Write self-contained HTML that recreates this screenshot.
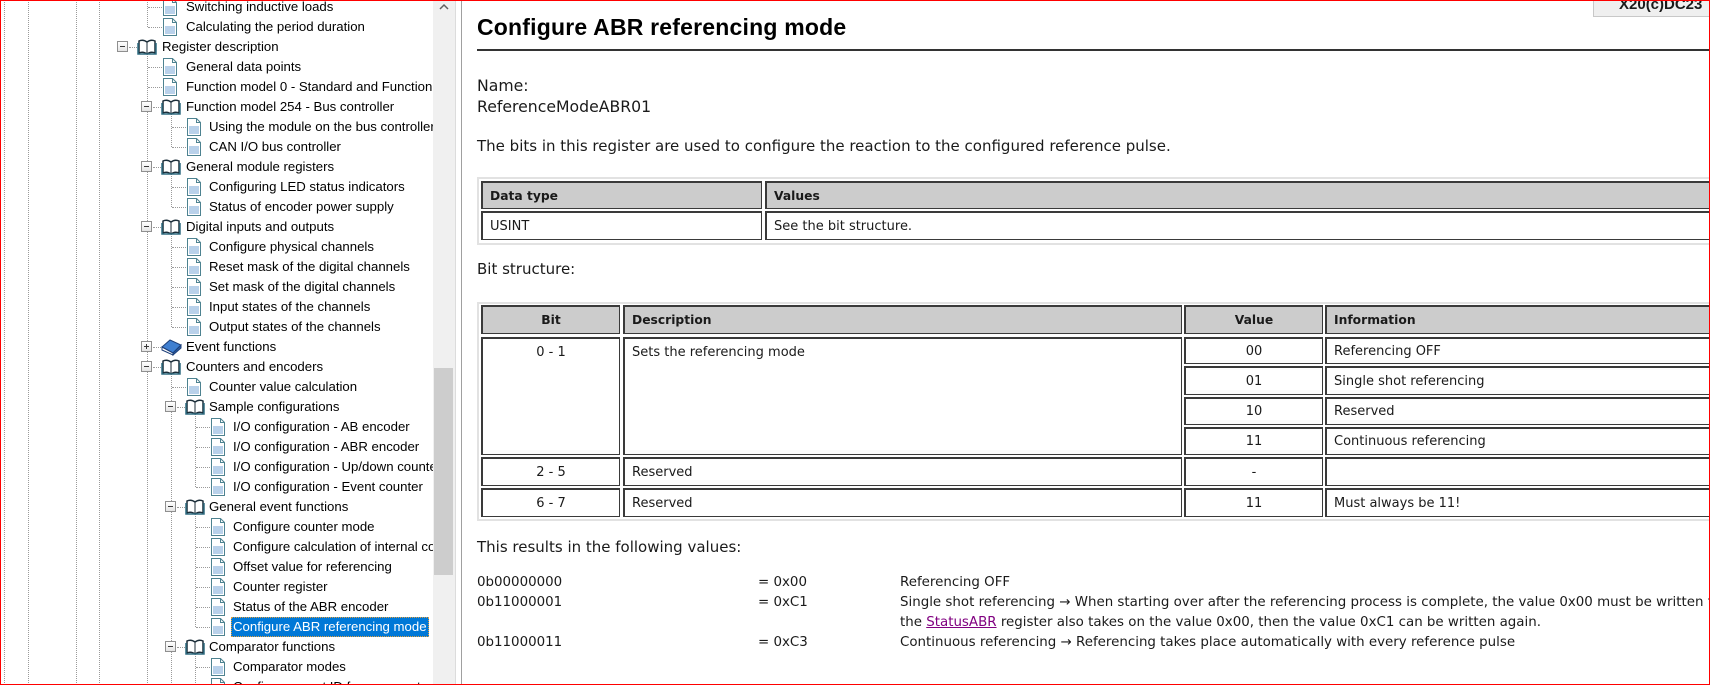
<!DOCTYPE html>
<html><head><meta charset="utf-8"><style>
*{margin:0;padding:0;box-sizing:border-box}
body{width:1710px;height:685px;overflow:hidden;background:#fff;position:relative;font-family:"DejaVu Sans","Liberation Sans",sans-serif;color:#1a1a1a}
.abs{position:absolute}
#tree{position:absolute;left:0;top:0;width:433px;height:685px;overflow:hidden;font-family:"Liberation Sans",sans-serif;font-size:13.2px;color:#000}
.v{position:absolute;border-left:1px dotted #9a9a9a;width:0}
.h{position:absolute;border-top:1px dotted #9a9a9a;height:0}
.r{position:absolute;left:0;width:433px;height:20px}
.r span{position:absolute;top:2px;white-space:nowrap;line-height:16px}
.r svg{position:absolute}
.bx{position:absolute;width:11px;height:11px;border:1px solid #8f8f8f;background:linear-gradient(#fff,#e4e4e4);top:4px}
.bx:before{content:"";position:absolute;left:2px;top:4px;width:5px;height:1px;background:#3a3a3a}
.bx.p:after{content:"";position:absolute;left:4px;top:2px;width:1px;height:5px;background:#3a3a3a}
#sb{position:absolute;left:433px;top:0;width:22px;height:685px;background:#f0f0f0}
#thumb{position:absolute;left:434px;top:368px;width:19px;height:207px;background:#cdcdcd}
#content{position:absolute;left:462px;top:0;width:1248px;height:685px;font-size:13px;overflow:hidden}
h1{position:absolute;left:15px;top:14px;font-family:"Liberation Sans",sans-serif;font-weight:bold;font-size:23px;letter-spacing:0.2px;color:#000}
.t{position:absolute;white-space:nowrap;line-height:16px}
.big{font-size:15px}
.nm{font-size:15.7px}
.lo{font-size:13.4px}
.c{position:absolute;border:1px solid #3a3a3a;border-left-width:2px;border-top-width:2px;white-space:nowrap;overflow:hidden;padding-left:7px;display:flex;align-items:center}
.c.hd{background:#cccccc;font-weight:bold;font-size:12.3px}
.c.ct{justify-content:center;padding-left:0}
.outer{position:absolute;border:2px solid #e2e2e2}
a{color:#800080}
</style></head><body>

<div id="tree">
<div class="v" style="left:4px;top:0;height:685px"></div>
<div class="v" style="left:28px;top:0;height:685px"></div>
<div class="v" style="left:76px;top:0;height:685px"></div>
<div class="v" style="left:99px;top:0;height:685px"></div>
<div class="v" style="left:147px;top:0;height:27px"></div>
<div class="v" style="left:147px;top:53px;height:632px"></div>
<div class="v" style="left:171px;top:113px;height:34px"></div>
<div class="v" style="left:171px;top:173px;height:34px"></div>
<div class="v" style="left:171px;top:233px;height:94px"></div>
<div class="v" style="left:171px;top:373px;height:312px"></div>
<div class="v" style="left:195px;top:413px;height:74px"></div>
<div class="v" style="left:195px;top:513px;height:114px"></div>
<div class="v" style="left:195px;top:653px;height:32px"></div>

<div class="r" style="top:-3px"><div class="h" style="left:148px;top:10px;width:14px"></div><svg style="left:162px;top:1px" width="16" height="18"><path d="M1.5 .5h9l4 4v13h-13z" fill="#fff" stroke="#4d8290"/><path d="M10.5 .5v4h4" fill="none" stroke="#4d8290"/><rect x="3" y="8" width="10" height="8" fill="#b9d1ea"/></svg><span style="left:186px">Switching inductive loads</span></div>
<div class="r" style="top:17px"><div class="h" style="left:148px;top:10px;width:14px"></div><svg style="left:162px;top:1px" width="16" height="18"><path d="M1.5 .5h9l4 4v13h-13z" fill="#fff" stroke="#4d8290"/><path d="M10.5 .5v4h4" fill="none" stroke="#4d8290"/><rect x="3" y="8" width="10" height="8" fill="#b9d1ea"/></svg><span style="left:186px">Calculating the period duration</span></div>
<div class="r" style="top:37px"><div class="bx" style="left:117px"></div><div class="h" style="left:129px;top:10px;width:8px"></div><svg style="left:137px;top:1px" width="20" height="18"><path d="M2 3q4-2 8 1q4-3 8-1v12q-4-2-8 1q-4-3-8-1z" fill="#fff" stroke="#1c2e3a" stroke-width="1.5"/><path d="M10 4v12" stroke="#1c2e3a"/><path d="M1 5v11h18V5" fill="none" stroke="#2f6c80" stroke-width="1.5"/></svg><span style="left:162px">Register description</span></div>
<div class="r" style="top:57px"><div class="h" style="left:148px;top:10px;width:14px"></div><svg style="left:162px;top:1px" width="16" height="18"><path d="M1.5 .5h9l4 4v13h-13z" fill="#fff" stroke="#4d8290"/><path d="M10.5 .5v4h4" fill="none" stroke="#4d8290"/><rect x="3" y="8" width="10" height="8" fill="#b9d1ea"/></svg><span style="left:186px">General data points</span></div>
<div class="r" style="top:77px"><div class="h" style="left:148px;top:10px;width:14px"></div><svg style="left:162px;top:1px" width="16" height="18"><path d="M1.5 .5h9l4 4v13h-13z" fill="#fff" stroke="#4d8290"/><path d="M10.5 .5v4h4" fill="none" stroke="#4d8290"/><rect x="3" y="8" width="10" height="8" fill="#b9d1ea"/></svg><span style="left:186px">Function model 0 - Standard and Function</span></div>
<div class="r" style="top:97px"><div class="bx" style="left:141px"></div><div class="h" style="left:153px;top:10px;width:8px"></div><svg style="left:161px;top:1px" width="20" height="18"><path d="M2 3q4-2 8 1q4-3 8-1v12q-4-2-8 1q-4-3-8-1z" fill="#fff" stroke="#1c2e3a" stroke-width="1.5"/><path d="M10 4v12" stroke="#1c2e3a"/><path d="M1 5v11h18V5" fill="none" stroke="#2f6c80" stroke-width="1.5"/></svg><span style="left:186px">Function model 254 - Bus controller</span></div>
<div class="r" style="top:117px"><div class="h" style="left:172px;top:10px;width:14px"></div><svg style="left:186px;top:1px" width="16" height="18"><path d="M1.5 .5h9l4 4v13h-13z" fill="#fff" stroke="#4d8290"/><path d="M10.5 .5v4h4" fill="none" stroke="#4d8290"/><rect x="3" y="8" width="10" height="8" fill="#b9d1ea"/></svg><span style="left:209px">Using the module on the bus controller</span></div>
<div class="r" style="top:137px"><div class="h" style="left:172px;top:10px;width:14px"></div><svg style="left:186px;top:1px" width="16" height="18"><path d="M1.5 .5h9l4 4v13h-13z" fill="#fff" stroke="#4d8290"/><path d="M10.5 .5v4h4" fill="none" stroke="#4d8290"/><rect x="3" y="8" width="10" height="8" fill="#b9d1ea"/></svg><span style="left:209px">CAN I/O bus controller</span></div>
<div class="r" style="top:157px"><div class="bx" style="left:141px"></div><div class="h" style="left:153px;top:10px;width:8px"></div><svg style="left:161px;top:1px" width="20" height="18"><path d="M2 3q4-2 8 1q4-3 8-1v12q-4-2-8 1q-4-3-8-1z" fill="#fff" stroke="#1c2e3a" stroke-width="1.5"/><path d="M10 4v12" stroke="#1c2e3a"/><path d="M1 5v11h18V5" fill="none" stroke="#2f6c80" stroke-width="1.5"/></svg><span style="left:186px">General module registers</span></div>
<div class="r" style="top:177px"><div class="h" style="left:172px;top:10px;width:14px"></div><svg style="left:186px;top:1px" width="16" height="18"><path d="M1.5 .5h9l4 4v13h-13z" fill="#fff" stroke="#4d8290"/><path d="M10.5 .5v4h4" fill="none" stroke="#4d8290"/><rect x="3" y="8" width="10" height="8" fill="#b9d1ea"/></svg><span style="left:209px">Configuring LED status indicators</span></div>
<div class="r" style="top:197px"><div class="h" style="left:172px;top:10px;width:14px"></div><svg style="left:186px;top:1px" width="16" height="18"><path d="M1.5 .5h9l4 4v13h-13z" fill="#fff" stroke="#4d8290"/><path d="M10.5 .5v4h4" fill="none" stroke="#4d8290"/><rect x="3" y="8" width="10" height="8" fill="#b9d1ea"/></svg><span style="left:209px">Status of encoder power supply</span></div>
<div class="r" style="top:217px"><div class="bx" style="left:141px"></div><div class="h" style="left:153px;top:10px;width:8px"></div><svg style="left:161px;top:1px" width="20" height="18"><path d="M2 3q4-2 8 1q4-3 8-1v12q-4-2-8 1q-4-3-8-1z" fill="#fff" stroke="#1c2e3a" stroke-width="1.5"/><path d="M10 4v12" stroke="#1c2e3a"/><path d="M1 5v11h18V5" fill="none" stroke="#2f6c80" stroke-width="1.5"/></svg><span style="left:186px">Digital inputs and outputs</span></div>
<div class="r" style="top:237px"><div class="h" style="left:172px;top:10px;width:14px"></div><svg style="left:186px;top:1px" width="16" height="18"><path d="M1.5 .5h9l4 4v13h-13z" fill="#fff" stroke="#4d8290"/><path d="M10.5 .5v4h4" fill="none" stroke="#4d8290"/><rect x="3" y="8" width="10" height="8" fill="#b9d1ea"/></svg><span style="left:209px">Configure physical channels</span></div>
<div class="r" style="top:257px"><div class="h" style="left:172px;top:10px;width:14px"></div><svg style="left:186px;top:1px" width="16" height="18"><path d="M1.5 .5h9l4 4v13h-13z" fill="#fff" stroke="#4d8290"/><path d="M10.5 .5v4h4" fill="none" stroke="#4d8290"/><rect x="3" y="8" width="10" height="8" fill="#b9d1ea"/></svg><span style="left:209px">Reset mask of the digital channels</span></div>
<div class="r" style="top:277px"><div class="h" style="left:172px;top:10px;width:14px"></div><svg style="left:186px;top:1px" width="16" height="18"><path d="M1.5 .5h9l4 4v13h-13z" fill="#fff" stroke="#4d8290"/><path d="M10.5 .5v4h4" fill="none" stroke="#4d8290"/><rect x="3" y="8" width="10" height="8" fill="#b9d1ea"/></svg><span style="left:209px">Set mask of the digital channels</span></div>
<div class="r" style="top:297px"><div class="h" style="left:172px;top:10px;width:14px"></div><svg style="left:186px;top:1px" width="16" height="18"><path d="M1.5 .5h9l4 4v13h-13z" fill="#fff" stroke="#4d8290"/><path d="M10.5 .5v4h4" fill="none" stroke="#4d8290"/><rect x="3" y="8" width="10" height="8" fill="#b9d1ea"/></svg><span style="left:209px">Input states of the channels</span></div>
<div class="r" style="top:317px"><div class="h" style="left:172px;top:10px;width:14px"></div><svg style="left:186px;top:1px" width="16" height="18"><path d="M1.5 .5h9l4 4v13h-13z" fill="#fff" stroke="#4d8290"/><path d="M10.5 .5v4h4" fill="none" stroke="#4d8290"/><rect x="3" y="8" width="10" height="8" fill="#b9d1ea"/></svg><span style="left:209px">Output states of the channels</span></div>
<div class="r" style="top:337px"><div class="bx p" style="left:141px"></div><div class="h" style="left:153px;top:10px;width:8px"></div><svg style="left:160px;top:1px" width="22" height="18"><path d="M2 9l8-7 11 5-8 8z" fill="#3f7fd0" stroke="#1d3f78"/><path d="M2 9v3l11 5v-2z" fill="#fff" stroke="#1d3f78"/><path d="M13 15l8-8v3l-8 7z" fill="#2a5ea8" stroke="#1d3f78"/></svg><span style="left:186px">Event functions</span></div>
<div class="r" style="top:357px"><div class="bx" style="left:141px"></div><div class="h" style="left:153px;top:10px;width:8px"></div><svg style="left:161px;top:1px" width="20" height="18"><path d="M2 3q4-2 8 1q4-3 8-1v12q-4-2-8 1q-4-3-8-1z" fill="#fff" stroke="#1c2e3a" stroke-width="1.5"/><path d="M10 4v12" stroke="#1c2e3a"/><path d="M1 5v11h18V5" fill="none" stroke="#2f6c80" stroke-width="1.5"/></svg><span style="left:186px">Counters and encoders</span></div>
<div class="r" style="top:377px"><div class="h" style="left:172px;top:10px;width:14px"></div><svg style="left:186px;top:1px" width="16" height="18"><path d="M1.5 .5h9l4 4v13h-13z" fill="#fff" stroke="#4d8290"/><path d="M10.5 .5v4h4" fill="none" stroke="#4d8290"/><rect x="3" y="8" width="10" height="8" fill="#b9d1ea"/></svg><span style="left:209px">Counter value calculation</span></div>
<div class="r" style="top:397px"><div class="bx" style="left:165px"></div><div class="h" style="left:177px;top:10px;width:8px"></div><svg style="left:185px;top:1px" width="20" height="18"><path d="M2 3q4-2 8 1q4-3 8-1v12q-4-2-8 1q-4-3-8-1z" fill="#fff" stroke="#1c2e3a" stroke-width="1.5"/><path d="M10 4v12" stroke="#1c2e3a"/><path d="M1 5v11h18V5" fill="none" stroke="#2f6c80" stroke-width="1.5"/></svg><span style="left:209px">Sample configurations</span></div>
<div class="r" style="top:417px"><div class="h" style="left:196px;top:10px;width:14px"></div><svg style="left:210px;top:1px" width="16" height="18"><path d="M1.5 .5h9l4 4v13h-13z" fill="#fff" stroke="#4d8290"/><path d="M10.5 .5v4h4" fill="none" stroke="#4d8290"/><rect x="3" y="8" width="10" height="8" fill="#b9d1ea"/></svg><span style="left:233px">I/O configuration - AB encoder</span></div>
<div class="r" style="top:437px"><div class="h" style="left:196px;top:10px;width:14px"></div><svg style="left:210px;top:1px" width="16" height="18"><path d="M1.5 .5h9l4 4v13h-13z" fill="#fff" stroke="#4d8290"/><path d="M10.5 .5v4h4" fill="none" stroke="#4d8290"/><rect x="3" y="8" width="10" height="8" fill="#b9d1ea"/></svg><span style="left:233px">I/O configuration - ABR encoder</span></div>
<div class="r" style="top:457px"><div class="h" style="left:196px;top:10px;width:14px"></div><svg style="left:210px;top:1px" width="16" height="18"><path d="M1.5 .5h9l4 4v13h-13z" fill="#fff" stroke="#4d8290"/><path d="M10.5 .5v4h4" fill="none" stroke="#4d8290"/><rect x="3" y="8" width="10" height="8" fill="#b9d1ea"/></svg><span style="left:233px">I/O configuration - Up/down counter</span></div>
<div class="r" style="top:477px"><div class="h" style="left:196px;top:10px;width:14px"></div><svg style="left:210px;top:1px" width="16" height="18"><path d="M1.5 .5h9l4 4v13h-13z" fill="#fff" stroke="#4d8290"/><path d="M10.5 .5v4h4" fill="none" stroke="#4d8290"/><rect x="3" y="8" width="10" height="8" fill="#b9d1ea"/></svg><span style="left:233px">I/O configuration - Event counter</span></div>
<div class="r" style="top:497px"><div class="bx" style="left:165px"></div><div class="h" style="left:177px;top:10px;width:8px"></div><svg style="left:185px;top:1px" width="20" height="18"><path d="M2 3q4-2 8 1q4-3 8-1v12q-4-2-8 1q-4-3-8-1z" fill="#fff" stroke="#1c2e3a" stroke-width="1.5"/><path d="M10 4v12" stroke="#1c2e3a"/><path d="M1 5v11h18V5" fill="none" stroke="#2f6c80" stroke-width="1.5"/></svg><span style="left:209px">General event functions</span></div>
<div class="r" style="top:517px"><div class="h" style="left:196px;top:10px;width:14px"></div><svg style="left:210px;top:1px" width="16" height="18"><path d="M1.5 .5h9l4 4v13h-13z" fill="#fff" stroke="#4d8290"/><path d="M10.5 .5v4h4" fill="none" stroke="#4d8290"/><rect x="3" y="8" width="10" height="8" fill="#b9d1ea"/></svg><span style="left:233px">Configure counter mode</span></div>
<div class="r" style="top:537px"><div class="h" style="left:196px;top:10px;width:14px"></div><svg style="left:210px;top:1px" width="16" height="18"><path d="M1.5 .5h9l4 4v13h-13z" fill="#fff" stroke="#4d8290"/><path d="M10.5 .5v4h4" fill="none" stroke="#4d8290"/><rect x="3" y="8" width="10" height="8" fill="#b9d1ea"/></svg><span style="left:233px">Configure calculation of internal counter</span></div>
<div class="r" style="top:557px"><div class="h" style="left:196px;top:10px;width:14px"></div><svg style="left:210px;top:1px" width="16" height="18"><path d="M1.5 .5h9l4 4v13h-13z" fill="#fff" stroke="#4d8290"/><path d="M10.5 .5v4h4" fill="none" stroke="#4d8290"/><rect x="3" y="8" width="10" height="8" fill="#b9d1ea"/></svg><span style="left:233px">Offset value for referencing</span></div>
<div class="r" style="top:577px"><div class="h" style="left:196px;top:10px;width:14px"></div><svg style="left:210px;top:1px" width="16" height="18"><path d="M1.5 .5h9l4 4v13h-13z" fill="#fff" stroke="#4d8290"/><path d="M10.5 .5v4h4" fill="none" stroke="#4d8290"/><rect x="3" y="8" width="10" height="8" fill="#b9d1ea"/></svg><span style="left:233px">Counter register</span></div>
<div class="r" style="top:597px"><div class="h" style="left:196px;top:10px;width:14px"></div><svg style="left:210px;top:1px" width="16" height="18"><path d="M1.5 .5h9l4 4v13h-13z" fill="#fff" stroke="#4d8290"/><path d="M10.5 .5v4h4" fill="none" stroke="#4d8290"/><rect x="3" y="8" width="10" height="8" fill="#b9d1ea"/></svg><span style="left:233px">Status of the ABR encoder</span></div>
<div class="r" style="top:617px"><div class="h" style="left:196px;top:10px;width:14px"></div><svg style="left:210px;top:1px" width="16" height="18"><path d="M1.5 .5h9l4 4v13h-13z" fill="#fff" stroke="#4d8290"/><path d="M10.5 .5v4h4" fill="none" stroke="#4d8290"/><rect x="3" y="8" width="10" height="8" fill="#b9d1ea"/></svg><div class="abs" style="left:231px;top:0;width:198px;height:20px;background:#0078d7;border:1px dotted #e0a040"></div><span style="left:233px;color:#fff">Configure ABR referencing mode</span></div>
<div class="r" style="top:637px"><div class="bx" style="left:165px"></div><div class="h" style="left:177px;top:10px;width:8px"></div><svg style="left:185px;top:1px" width="20" height="18"><path d="M2 3q4-2 8 1q4-3 8-1v12q-4-2-8 1q-4-3-8-1z" fill="#fff" stroke="#1c2e3a" stroke-width="1.5"/><path d="M10 4v12" stroke="#1c2e3a"/><path d="M1 5v11h18V5" fill="none" stroke="#2f6c80" stroke-width="1.5"/></svg><span style="left:209px">Comparator functions</span></div>
<div class="r" style="top:657px"><div class="h" style="left:196px;top:10px;width:14px"></div><svg style="left:210px;top:1px" width="16" height="18"><path d="M1.5 .5h9l4 4v13h-13z" fill="#fff" stroke="#4d8290"/><path d="M10.5 .5v4h4" fill="none" stroke="#4d8290"/><rect x="3" y="8" width="10" height="8" fill="#b9d1ea"/></svg><span style="left:233px">Comparator modes</span></div>
<div class="r" style="top:677px"><div class="h" style="left:196px;top:10px;width:14px"></div><svg style="left:210px;top:1px" width="16" height="18"><path d="M1.5 .5h9l4 4v13h-13z" fill="#fff" stroke="#4d8290"/><path d="M10.5 .5v4h4" fill="none" stroke="#4d8290"/><rect x="3" y="8" width="10" height="8" fill="#b9d1ea"/></svg><span style="left:233px">Configure event ID for comparator</span></div>
</div>

<div id="sb"></div>
<div id="thumb"></div>
<svg class="abs" style="left:437px;top:2px" width="14" height="10"><path d="M3 7l4-4 4 4" fill="none" stroke="#606060" stroke-width="1.5"/></svg>
<div class="abs" style="left:455px;top:0;width:1px;height:685px;background:#dcdcdc"></div>
<div class="abs" style="left:461px;top:0;width:1px;height:685px;background:#a0a0a0"></div>

<div id="content">
<h1>Configure ABR referencing mode</h1>
<div class="abs" style="left:15px;top:49px;width:1240px;height:2px;background:#333"></div>
<div class="t nm" style="left:15px;top:78px">Name:</div>
<div class="t nm" style="left:15px;top:99px">ReferenceModeABR01</div>
<div class="t big" style="left:15px;top:138px">The bits in this register are used to configure the reaction to the configured reference pulse.</div>

<div class="outer" style="left:15px;top:177px;width:1260px;height:68px"></div>
<div class="c hd" style="left:19px;top:181px;width:281px;height:28px">Data type</div>
<div class="c hd" style="left:303px;top:181px;width:960px;height:28px">Values</div>
<div class="c" style="left:19px;top:211px;width:281px;height:29px">USINT</div>
<div class="c" style="left:303px;top:211px;width:960px;height:29px">See the bit structure.</div>

<div class="t big" style="left:15px;top:261px">Bit structure:</div>

<div class="outer" style="left:15px;top:302px;width:1260px;height:219px"></div>
<div class="c hd ct" style="left:19px;top:305px;width:139px;height:29px">Bit</div>
<div class="c hd" style="left:161px;top:305px;width:559px;height:29px">Description</div>
<div class="c hd ct" style="left:722px;top:305px;width:139px;height:29px">Value</div>
<div class="c hd" style="left:863px;top:305px;width:400px;height:29px">Information</div>

<div class="c ct" style="left:19px;top:337px;width:139px;height:118px;align-items:flex-start;padding-top:6px">0 - 1</div>
<div class="c" style="left:161px;top:337px;width:559px;height:118px;align-items:flex-start;padding-top:6px">Sets the referencing mode</div>
<div class="c ct" style="left:722px;top:337px;width:139px;height:27px">00</div>
<div class="c" style="left:863px;top:337px;width:400px;height:27px">Referencing OFF</div>
<div class="c ct" style="left:722px;top:366px;width:139px;height:29px">01</div>
<div class="c" style="left:863px;top:366px;width:400px;height:29px">Single shot referencing</div>
<div class="c ct" style="left:722px;top:397px;width:139px;height:28px">10</div>
<div class="c" style="left:863px;top:397px;width:400px;height:28px">Reserved</div>
<div class="c ct" style="left:722px;top:427px;width:139px;height:28px">11</div>
<div class="c" style="left:863px;top:427px;width:400px;height:28px">Continuous referencing</div>

<div class="c ct" style="left:19px;top:457px;width:139px;height:29px">2 - 5</div>
<div class="c" style="left:161px;top:457px;width:559px;height:29px">Reserved</div>
<div class="c ct" style="left:722px;top:457px;width:139px;height:29px">-</div>
<div class="c" style="left:863px;top:457px;width:400px;height:29px"></div>

<div class="c ct" style="left:19px;top:488px;width:139px;height:29px">6 - 7</div>
<div class="c" style="left:161px;top:488px;width:559px;height:29px">Reserved</div>
<div class="c ct" style="left:722px;top:488px;width:139px;height:29px">11</div>
<div class="c" style="left:863px;top:488px;width:400px;height:29px">Must always be 11!</div>

<div class="t big" style="left:15px;top:539px">This results in the following values:</div>
<div class="t lo" style="left:15px;top:575px">0b00000000</div>
<div class="t lo" style="left:296px;top:575px">= 0x00</div>
<div class="t lo" style="left:438px;top:575px">Referencing OFF</div>
<div class="t lo" style="left:15px;top:595px">0b11000001</div>
<div class="t lo" style="left:296px;top:595px">= 0xC1</div>
<div class="t lo" style="left:438px;top:595px">Single shot referencing → When starting over after the referencing process is complete, the value 0x00 must be written to</div>
<div class="t lo" style="left:438px;top:615px">the <a href="#">StatusABR</a> register also takes on the value 0x00, then the value 0xC1 can be written again.</div>
<div class="t lo" style="left:15px;top:635px">0b11000011</div>
<div class="t lo" style="left:296px;top:635px">= 0xC3</div>
<div class="t lo" style="left:438px;top:635px">Continuous referencing → Referencing takes place automatically with every reference pulse</div>
</div>

<div class="abs" style="left:1593px;top:-3px;width:130px;height:20px;background:#efefef;border:1px solid #c8c8c8;font-family:'Liberation Sans',sans-serif;font-weight:bold;font-size:15px;padding-left:25px;line-height:13px;overflow:hidden;white-space:nowrap">X20(c)DC23</div>

<div class="abs" style="left:0;top:0;width:1710px;height:685px;border:1px solid #f00;pointer-events:none"></div>
</body></html>
